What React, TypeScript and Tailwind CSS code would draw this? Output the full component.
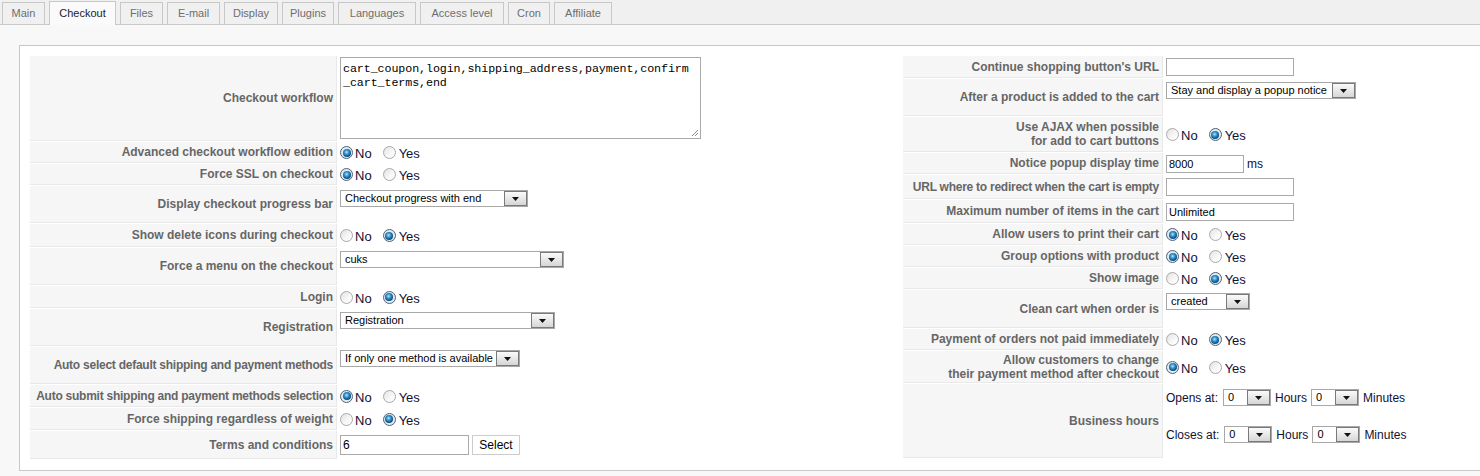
import type { ReactNode } from 'react'

const tabs = [
  { label: 'Main', w: 'w-[43px]' },
  { label: 'Checkout', w: 'w-[67px]', active: true },
  { label: 'Files', w: 'w-[43px]' },
  { label: 'E-mail', w: 'w-[53px]' },
  { label: 'Display', w: 'w-[54px]' },
  { label: 'Plugins', w: 'w-[52px]' },
  { label: 'Languages', w: 'w-[78px]' },
  { label: 'Access level', w: 'w-[84px]' },
  { label: 'Cron', w: 'w-[42px]' },
  { label: 'Affiliate', w: 'w-[58px]' },
]

function Radio({ checked }: { checked?: boolean }) {
  if (checked) {
    return (
      <span className="inline-flex w-[13px] h-[13px] shrink-0 items-center justify-center rounded-full border border-[#4d6478] bg-[#e4e9ee]">
        <span className="w-[8px] h-[8px] rounded-full bg-[radial-gradient(circle_at_45%_40%,#b9e6ff_0,#3a9ad6_30%,#0b5286_65%,#083656_100%)]" />
      </span>
    )
  }
  return (
    <span className="inline-block w-[13px] h-[13px] shrink-0 rounded-full border border-[#a9a9a9] bg-[linear-gradient(135deg,#e2e2e2,#f8f8f8_60%,#ffffff)]" />
  )
}

function YesNo({ yes }: { yes?: boolean }) {
  return (
    <div className="flex items-center text-[13px] leading-[15px] text-[#111133]">
      <Radio checked={!yes} />
      <span className="ml-[2px] mt-[2px]">No</span>
      <span className="ml-[11px] flex"><Radio checked={yes} /></span>
      <span className="ml-[3px] mt-[2px]">Yes</span>
    </div>
  )
}

function Select({ value, w }: { value: string; w: string }) {
  return (
    <span className={`flex h-[17px] shrink-0 items-stretch border border-[#a8a8a8] bg-white ${w}`}>
      <span className="flex-1 overflow-hidden whitespace-nowrap pl-[4px] text-[11px] leading-[15px] text-black">{value}</span>
      <span className="flex w-[23px] items-center justify-center border border-[#7a7a7a] bg-[linear-gradient(#fafafa,#d6d6d6)]">
        <svg width="7" height="4" viewBox="0 0 7 4">
          <path d="M0 0h7L3.5 4z" fill="#111" />
        </svg>
      </span>
    </span>
  )
}

function TextInput({ value = '', w }: { value?: string; w: string }) {
  return (
    <input
      readOnly
      value={value}
      className={`block h-[18px] border border-[#aaaaaa] bg-white pl-[2px] text-[11px] text-black outline-none ${w}`}
    />
  )
}

type Row = { label: ReactNode; h: string; top?: string; tight?: boolean; content: ReactNode }

function FormTable({ rows, labelW }: { rows: Row[]; labelW: string }) {
  return (
    <table className="border-separate border-spacing-px">
      <tbody>
        {rows.map((r, i) => (
          <tr key={i} className={r.h}>
            <td
              className={`whitespace-nowrap border-b border-r border-[#e9e9e9] bg-[#f6f6f6] pr-[3px] text-right align-middle text-[12px] font-bold leading-[14px] text-[#666666] ${labelW} ${r.tight ? 'tracking-[-0.25px]' : ''}`}
            >
              {r.label}
            </td>
            <td className={`pl-[2px] leading-none ${r.top ? `align-top ${r.top}` : 'align-middle'}`}>
              <div className="flex items-center">{r.content}</div>
            </td>
          </tr>
        ))}
      </tbody>
    </table>
  )
}

function HoursLine({ label }: { label: string }) {
  return (
    <div className="flex items-center gap-[4px] text-[12px] text-[#111133]">
      <span className="mr-[1px]">{label}</span>
      <Select value="0" w="w-[48px]" />
      <span>Hours</span>
      <Select value="0" w="w-[48px]" />
      <span>Minutes</span>
    </div>
  )
}

const leftRows: Row[] = [
  {
    label: 'Checkout workflow',
    h: 'h-[85px]',
    top: 'pt-[1px]',
    content: (
      <div className="relative h-[82px] w-[361px] border border-[#aaaaaa] bg-white px-[2px] pt-[4px] font-['Liberation_Mono','Courier_New',monospace] text-[11.7px] leading-[14px] tracking-[-0.1px] whitespace-pre-line text-black">
        {'cart_coupon,login,shipping_address,payment,confirm\n_cart_terms,end'}
        <svg className="absolute bottom-[1px] right-[1px]" width="8" height="8" viewBox="0 0 8 8">
          <path d="M7 1L1 7M7 4L4 7" stroke="#8a8a8a" strokeWidth="1" />
        </svg>
      </div>
    ),
  },
  { label: 'Advanced checkout workflow edition', h: 'h-[21px]', content: <YesNo /> },
  { label: 'Force SSL on checkout', h: 'h-[21px]', content: <YesNo /> },
  { label: 'Display checkout progress bar', h: 'h-[37px]', top: 'pt-[4px]', content: <Select value="Checkout progress with end" w="w-[188px]" /> },
  { label: 'Show delete icons during checkout', h: 'h-[23px]', content: <YesNo yes /> },
  { label: 'Force a menu on the checkout', h: 'h-[37px]', top: 'pt-[3px]', content: <Select value="cuks" w="w-[224px]" /> },
  { label: 'Login', h: 'h-[22px]', content: <YesNo yes /> },
  { label: 'Registration', h: 'h-[37px]', top: 'pt-[3px]', content: <Select value="Registration" w="w-[215px]" /> },
  { label: 'Auto select default shipping and payment methods', h: 'h-[37px]', top: 'pt-[3px]', tight: true, content: <Select value="If only one method is available" w="w-[180px]" /> },
  { label: 'Auto submit shipping and payment methods selection', h: 'h-[22px]', tight: true, content: <YesNo /> },
  { label: 'Force shipping regardless of weight', h: 'h-[22px]', content: <YesNo yes /> },
  {
    label: 'Terms and conditions',
    h: 'h-[28px]',
    content: (
      <div className="flex items-center gap-[3px]">
        <input readOnly value="6" className="block h-[20px] w-[129px] border border-[#aaaaaa] bg-white pl-[2px] text-[12px] text-black outline-none" />
        <button className="h-[20px] w-[48px] border border-[#cccccc] bg-white text-[12px] text-black">Select</button>
      </div>
    ),
  },
]

const rightRows: Row[] = [
  { label: "Continue shopping button's URL", h: 'h-[22px]', content: <TextInput w="w-[128px]" /> },
  { label: 'After a product is added to the cart', h: 'h-[37px]', top: 'pt-[3px]', content: <Select value="Stay and display a popup notice" w="w-[190px]" /> },
  {
    label: (
      <>
        Use AJAX when possible
        <br />
        for add to cart buttons
      </>
    ),
    h: 'h-[35px]',
    content: <YesNo yes />,
  },
  {
    label: 'Notice popup display time',
    h: 'h-[21px]',
    content: (
      <div className="flex items-center gap-[3px] text-[12px] text-[#111133]">
        <TextInput value="8000" w="w-[78px]" />
        <span>ms</span>
      </div>
    ),
  },
  { label: 'URL where to redirect when the cart is empty', h: 'h-[24px]', tight: true, content: <TextInput w="w-[128px]" /> },
  { label: 'Maximum number of items in the cart', h: 'h-[23px]', content: <TextInput value="Unlimited" w="w-[128px]" /> },
  { label: 'Allow users to print their cart', h: 'h-[21px]', content: <YesNo /> },
  { label: 'Group options with product', h: 'h-[21px]', content: <YesNo /> },
  { label: 'Show image', h: 'h-[21px]', content: <YesNo yes /> },
  { label: 'Clean cart when order is', h: 'h-[38px]', top: 'pt-[3px]', content: <Select value="created" w="w-[84px]" /> },
  { label: 'Payment of orders not paid immediately', h: 'h-[21px]', content: <YesNo yes /> },
  {
    label: (
      <>
        Allow customers to change
        <br />
        their payment method after checkout
      </>
    ),
    h: 'h-[32px]',
    content: <YesNo />,
  },
  {
    label: 'Business hours',
    h: 'h-[74px]',
    top: 'pt-[5px]',
    content: (
      <div className="flex flex-col gap-[20px]">
        <HoursLine label="Opens at:" />
        <HoursLine label="Closes at:" />
      </div>
    ),
  },
]

export default function App() {
  return (
    <div className="h-[476px] w-[1480px] overflow-hidden bg-[#f8f8f8] font-['Liberation_Sans',Arial,sans-serif]">
      {/* Tabs */}
      <div className="flex h-[25px] items-end gap-[4px] border-b border-[#c8c8c8] bg-[#f0f0f0] pl-[2px]">
        {tabs.map((t) =>
          t.active ? (
            <div
              key={t.label}
              className={`-mb-px flex h-[24px] items-center justify-center border border-b-0 border-[#c8c8c8] bg-[#fafafa] text-[11px] text-[#222222] ${t.w}`}
            >
              {t.label}
            </div>
          ) : (
            <div
              key={t.label}
              className={`flex h-[22px] items-center justify-center border border-b-0 border-[#c8c8c8] bg-[#f0f0f0] text-[11px] text-[#6e6e6e] ${t.w}`}
            >
              {t.label}
            </div>
          ),
        )}
      </div>

      {/* Options panel */}
      <div className="pl-[19px] pt-[20px]">
        <div className="flex h-[426px] w-[1480px] border border-[#c8c8c8] bg-white pl-[9px] pt-[9px]">
          <div className="w-[873px]">
            <FormTable rows={leftRows} labelW="w-[307px]" />
          </div>
          <div className="flex-1">
            <FormTable rows={rightRows} labelW="w-[260px]" />
          </div>
        </div>
      </div>
    </div>
  )
}
